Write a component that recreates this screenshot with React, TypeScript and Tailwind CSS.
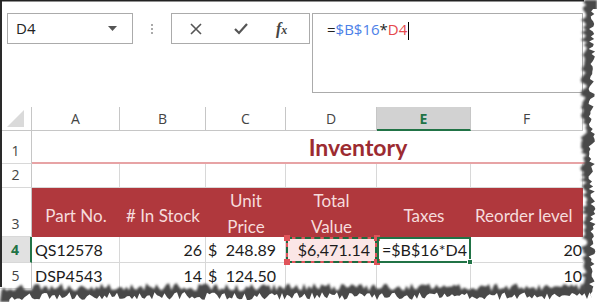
import React from "react";

const cols = [
  { key: "A", w: 88 },
  { key: "B", w: 86 },
  { key: "C", w: 80 },
  { key: "D", w: 91 },
  { key: "E", w: 94 },
  { key: "F", w: 112 },
];

// deterministic jitter for the torn edge
function makeRand(seed: number) {
  let s = seed;
  return () => {
    s = (s * 1103515245 + 12345) % 2147483648;
    return s / 2147483648;
  };
}

function TornEdge() {
  const rand = makeRand(11);
  const pts: string[] = [];
  for (let y = 0; y <= 286; y += 2.5) {
    pts.push(`${584 + (rand() - 0.5) * 7},${y}`);
  }
  for (let x = 584; x >= 0; x -= 2.5) {
    pts.push(`${x},${287 + (rand() - 0.5) * 8}`);
  }
  pts.push("0,302", "597,302", "597,0");
  const poly = pts.join(" ");
  return (
    <svg className="absolute inset-0 pointer-events-none" width={597} height={302}>
      <defs>
        <filter id="blur" x="-10%" y="-10%" width="120%" height="120%">
          <feGaussianBlur stdDeviation="1" />
        </filter>
      </defs>
      <polygon points={poly} fill="#4a4a4a" filter="url(#blur)" />
      <polygon points={poly} fill="#ffffff" transform="translate(8,9)" />
      <rect x={0} y={0} width={584} height={1.5} fill="#222" />
    </svg>
  );
}

function RowHead({ n, h, selected }: { n: number; h: number; selected?: boolean }) {
  return (
    <div
      className={
        "w-[32px] shrink-0 flex items-end justify-center pb-[2px] text-[14px] border-b border-[#d8d8d8] font-['Open_Sans',sans-serif] " +
        (selected
          ? "bg-[#e1e1e1] text-[#217346] font-bold border-r-2 border-r-[#217346]"
          : "text-[#444] border-r border-r-[#c6c6c6]")
      }
      style={{ height: h }}
    >
      {n}
    </div>
  );
}

export default function App() {
  return (
    <div className="relative w-[597px] h-[302px] bg-white overflow-hidden font-['Lato',sans-serif]">
      <div className="absolute left-0 top-0 w-[2px] h-[287px] bg-[#2a2a2a]" />

      {/* Formula bar */}
      <div className="flex items-start pt-[13px] pl-[7px] h-[107px] font-['Open_Sans',sans-serif]">
        <div className="w-[126px] h-[31px] border border-[#ababab] flex items-center justify-between pl-[8px] pr-[15px]">
          <span className="text-[15px] text-[#222]">D4</span>
          <svg width="9" height="5" viewBox="0 0 9 5">
            <path d="M0 0 H9 L4.5 5 Z" fill="#555" />
          </svg>
        </div>
        <div className="w-[38px] h-[31px] flex flex-col items-center justify-center gap-[2px]">
          <span className="w-[2px] h-[2px] bg-[#aaa]" />
          <span className="w-[2px] h-[2px] bg-[#aaa]" />
          <span className="w-[2px] h-[2px] bg-[#aaa]" />
        </div>
        <div className="w-[139px] h-[31px] border border-[#ababab] flex items-center pl-[18px]">
          <svg width="12" height="12" viewBox="0 0 12 12">
            <path d="M1 1 L11 11 M11 1 L1 11" stroke="#555" strokeWidth="1.6" />
          </svg>
          <svg width="14" height="12" viewBox="0 0 14 12" className="ml-[32px]">
            <path d="M1 6 L5 10 L13 1" stroke="#555" strokeWidth="2.2" fill="none" />
          </svg>
          <span className="ml-[28px] font-['Liberation_Serif',serif] italic font-bold text-[16px] text-[#444] leading-none">
            f<span className="text-[12px]">x</span>
          </span>
        </div>
        <div className="ml-[2px] w-[271px] h-[80px] border border-[#ababab] pl-[14px] pt-[4px] text-[15px] leading-[22px]">
          <span className="text-[#222]">=</span>
          <span className="text-[#4d7fe8]">$B$16</span>
          <span className="text-[#222]">*</span>
          <span className="text-[#e5484d]">D4</span>
          <span className="inline-block w-[1px] h-[18px] bg-black align-middle ml-[1px]" />
        </div>
      </div>

      {/* Column headers */}
      <div className="flex h-[24px] font-['Open_Sans',sans-serif] text-[14px]">
        <div className="w-[32px] shrink-0 border-b border-r border-[#c6c6c6] flex items-end justify-center pb-[3px]">
          <svg width="17" height="17" viewBox="0 0 17 17">
            <path d="M17 0 V17 H0 Z" fill="#dadada" />
          </svg>
        </div>
        {cols.map((c) =>
          c.key === "E" ? (
            <div
              key={c.key}
              className="shrink-0 flex items-center justify-center bg-[#d2d2d2] border-b-2 border-[#217346] border-r border-r-[#c6c6c6] text-[#217346] font-bold"
              style={{ width: c.w }}
            >
              {c.key}
            </div>
          ) : (
            <div
              key={c.key}
              className="shrink-0 flex items-center justify-center border-b border-r border-[#c6c6c6] text-[#444]"
              style={{ width: c.w }}
            >
              {c.key}
            </div>
          )
        )}
      </div>

      {/* Row 1 - title */}
      <div className="flex h-[33px]">
        <RowHead n={1} h={33} />
        <div className="w-[652px] shrink-0 flex items-center justify-center border-b-2 border-[#e7a3a5] text-[23px] font-bold text-[#9c2b31] leading-none pt-[1px]">
          Inventory
        </div>
      </div>

      {/* Row 2 */}
      <div className="flex h-[24px]">
        <RowHead n={2} h={24} />
        {cols.map((c) => (
          <div
            key={c.key}
            className="shrink-0 border-b border-r border-[#d8d8d8]"
            style={{ width: c.w }}
          />
        ))}
      </div>

      {/* Row 3 - header */}
      <div className="flex h-[49px]">
        <RowHead n={3} h={49} />
        <div className="flex bg-[#b0383d] text-[#f6dcdc] text-[17px] leading-[26px]">
          <div className="w-[88px] flex items-center justify-center pt-[6px]">Part No.</div>
          <div className="w-[86px] flex items-center justify-center pt-[6px] whitespace-nowrap">
            # In Stock
          </div>
          <div className="w-[80px] flex flex-col items-center justify-center pt-[3px]">
            <span>Unit</span>
            <span>Price</span>
          </div>
          <div className="w-[91px] flex flex-col items-center justify-center pt-[3px]">
            <span>Total</span>
            <span>Value</span>
          </div>
          <div className="w-[94px] flex items-center justify-center pt-[6px]">Taxes</div>
          <div className="w-[112px] flex items-center justify-start pl-[4px] pt-[6px] whitespace-nowrap">
            Reorder level
          </div>
        </div>
      </div>

      {/* Row 4 */}
      <div className="flex h-[26px] text-[16px] text-[#1c1c1c]">
        <RowHead n={4} h={26} selected />
        <div className="w-[88px] shrink-0 border-b border-r border-[#d8d8d8] flex items-center pl-[3px]">
          QS12578
        </div>
        <div className="w-[86px] shrink-0 border-b border-r border-[#d8d8d8] flex items-center justify-end pr-[3px]">
          26
        </div>
        <div className="w-[80px] shrink-0 border-b border-r border-[#d8d8d8] flex items-center justify-between pl-[2px] pr-[9px]">
          <span>$</span>
          <span>248.89</span>
        </div>
        <div className="relative w-[91px] shrink-0 bg-[#fbe6e6] flex items-center justify-end pr-[7px]">
          <div className="absolute inset-0 border-2 border-[#e0545a]" />
          <div className="absolute inset-0 border-2 border-dashed border-[#1d6b40]" />
          <span className="absolute -left-[2px] -top-[2px] w-[6px] h-[6px] bg-[#e0545a]" />
          <span className="absolute -right-[3px] -top-[2px] w-[6px] h-[6px] bg-[#e0545a]" />
          <span className="absolute -left-[2px] -bottom-[2px] w-[6px] h-[6px] bg-[#e0545a]" />
          <span className="absolute -right-[3px] -bottom-[2px] w-[6px] h-[6px] bg-[#e0545a]" />
          <span className="relative">$6,471.14</span>
        </div>
        <div className="relative w-[94px] shrink-0 border-2 border-[#217346] flex items-center pl-[3px]">
          =$B$16*D4
          <span className="absolute -right-[4px] -bottom-[4px] w-[6px] h-[6px] bg-[#217346] border border-white" />
        </div>
        <div className="w-[112px] shrink-0 border-b border-[#d8d8d8] flex items-center justify-end pr-[1px]">
          20
        </div>
      </div>

      {/* Row 5 */}
      <div className="flex h-[26px] text-[16px] text-[#1c1c1c]">
        <RowHead n={5} h={26} />
        <div className="w-[88px] shrink-0 border-r border-[#d8d8d8] flex items-center pl-[3px]">
          DSP4543
        </div>
        <div className="w-[86px] shrink-0 border-r border-[#d8d8d8] flex items-center justify-end pr-[3px]">
          14
        </div>
        <div className="w-[80px] shrink-0 border-r border-[#d8d8d8] flex items-center justify-between pl-[2px] pr-[9px]">
          <span>$</span>
          <span>124.50</span>
        </div>
        <div className="w-[91px] shrink-0 border-r border-[#d8d8d8]" />
        <div className="w-[94px] shrink-0 border-r border-[#d8d8d8]" />
        <div className="w-[112px] shrink-0 flex items-center justify-end pr-[1px]">10</div>
      </div>

      <TornEdge />
    </div>
  );
}
